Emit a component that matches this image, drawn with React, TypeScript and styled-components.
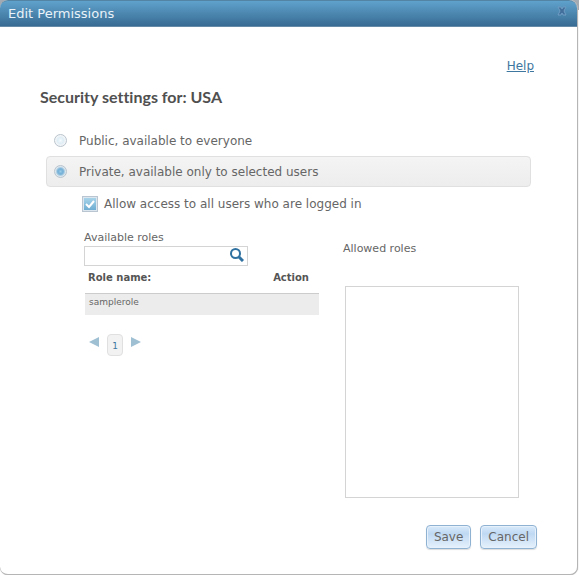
import React, { useState } from "react";
import styled, { createGlobalStyle, css } from "styled-components";

const GlobalStyle = createGlobalStyle`
  *, *::before, *::after { box-sizing: border-box; }
  body {
    margin: 0;
    background: #fff;
    color: #666;
    font-family: "DejaVu Sans", Verdana, sans-serif;
    font-size: 12px;
    line-height: 16px;
  }
  button, input { font: inherit; color: inherit; }
`;

const Backdrop = styled.div`
  padding-right: 1px;
  background: linear-gradient(#a3aab2 0, #a3aab2 10px, #fff 10px);
`;

const Dialog = styled.section`
  background: #fff;
  border: solid #b5b5b5;
  border-width: 0 1px 1px 0;
  border-radius: 8px;
  box-shadow: 0 0 1px #999;
`;

const TitleBar = styled.header`
  display: flex;
  align-items: flex-start;
  justify-content: space-between;
  height: 27px;
  padding: 5px 10px 0 8px;
  border-top: 1px solid #5484a3;
  border-bottom: 1px solid #668ba9;
  border-radius: 8px 8px 0 0;
  background: linear-gradient(#5fa2cc, #386b93);
`;

const Title = styled.h1`
  margin: 0;
  color: #e9f2f8;
  font-size: 13px;
  font-weight: 400;
  line-height: 16px;
`;

const CloseButton = styled.button`
  width: 10px;
  height: 10px;
  padding: 0;
  border: 0;
  background: none;
  cursor: pointer;
  svg { display: block; }
`;

const Content = styled.form`
  display: flex;
  flex-direction: column;
  padding: 31px 40px 25px;
`;

const HelpLink = styled.a`
  align-self: flex-end;
  margin-right: 3px;
  color: #3d77a0;
`;

const Heading = styled.h2`
  margin: 12px 0 17px;
  color: #505050;
  font: 700 16px/22px Lato, sans-serif;
  font-variant-ligatures: none;
`;

const Choice = styled.label<{ $selected: boolean }>`
  display: flex;
  align-items: center;
  gap: 12px;
  height: 31px;
  margin: 0 6px;
  padding: 0 7px;
  border: 1px solid transparent;
  border-radius: 4px;
  ${(p) =>
    p.$selected &&
    css`
      border-color: #e0e0e0;
      background: linear-gradient(#f4f4f4, #ededed);
    `}
`;

const Radio = styled.input.attrs({ type: "radio" })`
  appearance: none;
  width: 13px;
  height: 13px;
  margin: 0;
  border: 1px solid #b9c4cd;
  border-radius: 50%;
  background: radial-gradient(circle, #f4fafd 0, #dfedf5 3px, #f3f6f8 5px);
  &:checked {
    background: radial-gradient(circle, #9ccbe6 0, #78b3d9 2px, #7fb5d9 3px, #dde7ee 5px);
  }
`;

const CheckRow = styled.label`
  display: flex;
  align-items: center;
  align-self: flex-start;
  gap: 6px;
  height: 16px;
  margin: 9px 0 0 42px;
`;

const CheckHolder = styled.span`
  display: grid;
  > * { grid-area: 1 / 1; }
  svg { pointer-events: none; }
`;

const Checkbox = styled.input.attrs({ type: "checkbox" })`
  appearance: none;
  width: 16px;
  height: 16px;
  margin: 0;
  padding: 1px;
  border: 1px solid #b9c6d1;
  background: #fff;
  &:checked {
    background: linear-gradient(#a9d4ea, #6dadd2) content-box, #dbe6ee;
  }
`;

const Columns = styled.div`
  display: grid;
  grid-template-columns: 235px minmax(0, 1fr);
  column-gap: 26px;
  margin: 19px 18px 0 44px;
`;

const Column = styled.div<{ $top?: number }>`
  display: flex;
  flex-direction: column;
  padding-top: ${(p) => p.$top ?? 0}px;
`;

const FieldLabel = styled.label`
  font-size: 11px;
  line-height: 14px;
`;

const SearchBox = styled.div`
  display: flex;
  width: 164px;
  height: 20px;
  margin-top: 1px;
  border: 1px solid #d4d4d4;
  background: #fff;
`;

const SearchInput = styled.input`
  flex: 1;
  min-width: 0;
  padding: 0 4px;
  border: 0;
  outline: 0;
  background: none;
  font-size: 11px;
`;

const SearchButton = styled.button`
  align-self: flex-start;
  width: 17px;
  height: 15px;
  padding: 0;
  border: 0;
  background: none;
  cursor: pointer;
  svg { display: block; }
`;

const RolesTable = styled.table`
  width: 234px;
  margin: 1px 0 0 1px;
  border-collapse: collapse;
  text-align: left;
  th {
    height: 26px;
    padding: 4px 10px 8px 3px;
    border-bottom: 1px solid #ccc;
    color: #555;
    font-size: 10px;
    line-height: 14px;
  }
  th:last-child { text-align: right; }
  td {
    height: 21px;
    padding: 2px 4px 6px;
    background: #ececec;
    font-size: 9px;
    line-height: 12px;
  }
`;

const Pager = styled.nav`
  display: flex;
  align-items: flex-start;
  gap: 8px;
  margin: 19px 0 0 5px;
`;

const ArrowButton = styled.button`
  width: 10px;
  height: 15px;
  padding: 2px 0 0;
  border: 0;
  background: none;
  display: block;
  svg { display: block; }
`;

const PageButton = styled.button`
  width: 16px;
  height: 22px;
  padding: 2px 0 0;
  border: 1px solid #e0e0e0;
  border-radius: 4px;
  background: #f2f2f2;
  color: #3d77a0;
  font-size: 9px;
  line-height: 12px;
`;

const AllowedLabel = styled.h3`
  margin: 0 0 0 -2px;
  font-size: 11px;
  font-weight: 400;
  line-height: 14px;
`;

const AllowedList = styled.div`
  min-height: 212px;
  margin-top: 30px;
  border: 1px solid #d4d4d4;
`;

const Actions = styled.footer`
  display: flex;
  justify-content: flex-end;
  gap: 9px;
  margin-top: 27px;
`;

const ActionButton = styled.button`
  height: 24px;
  padding: 0 7px 1px;
  border: 1px solid #8fb2d3;
  border-radius: 4px;
  background: linear-gradient(#d9eafa 0, #bfd9f3 35%, #e6f1fc);
  box-shadow: inset 0 0 0 1px #e6f1fb, 0 1px 1px #ddd;
  cursor: pointer;
`;

export default function App() {
  const [access, setAccess] = useState("private");
  const [loggedIn, setLoggedIn] = useState(true);
  const [search, setSearch] = useState("");
  const roles = ["samplerole"].filter((role) => role.includes(search));

  return (
    <>
      <GlobalStyle />
      <Backdrop>
        <Dialog role="dialog" aria-labelledby="dialog-title">
          <TitleBar>
            <Title id="dialog-title">Edit Permissions</Title>
            <CloseButton type="button" aria-label="Close">
              <svg width="10" height="10" viewBox="0 0 10 10">
                <path d="M1 1h3l1 2 1-2h3L7 5l2 4H6L5 7 4 9H1l2-4z" fill="#426f9b" stroke="#6f9dc4" strokeWidth="1" />
              </svg>
            </CloseButton>
          </TitleBar>
          <Content onSubmit={(e) => e.preventDefault()}>
            <HelpLink href="#help">Help</HelpLink>
            <Heading>Security settings for: USA</Heading>
            <Choice $selected={access === "public"}>
              <Radio name="access" checked={access === "public"} onChange={() => setAccess("public")} />
              Public, available to everyone
            </Choice>
            <Choice $selected={access === "private"}>
              <Radio name="access" checked={access === "private"} onChange={() => setAccess("private")} />
              Private, available only to selected users
            </Choice>
            <CheckRow>
              <CheckHolder>
                <Checkbox checked={loggedIn} onChange={(e) => setLoggedIn(e.target.checked)} />
                {loggedIn && (
                  <svg width="16" height="16" viewBox="0 0 16 16" aria-hidden="true">
                    <path d="M4 8l3 3 5-6" fill="none" stroke="#fff" strokeWidth="2" />
                  </svg>
                )}
              </CheckHolder>
              Allow access to all users who are logged in
            </CheckRow>
            <Columns>
              <Column>
                <FieldLabel htmlFor="role-search">Available roles</FieldLabel>
                <SearchBox>
                  <SearchInput id="role-search" value={search} onChange={(e) => setSearch(e.target.value)} />
                  <SearchButton type="button" aria-label="Search roles">
                    <svg width="14" height="14" viewBox="0 0 14 14" fill="none" stroke="#2f71a0">
                      <circle cx="5.500" cy="5.500" r="4.500" strokeWidth="2" />
                      <path d="M9 9l4 4" strokeWidth="3" />
                    </svg>
                  </SearchButton>
                </SearchBox>
                <RolesTable>
                  <thead>
                    <tr>
                      <th scope="col">Role name:</th>
                      <th scope="col">Action</th>
                    </tr>
                  </thead>
                  <tbody>
                    {roles.map((role) => (
                      <tr key={role}>
                        <td>{role}</td>
                        <td />
                      </tr>
                    ))}
                  </tbody>
                </RolesTable>
                <Pager aria-label="Role pages">
                  <ArrowButton type="button" aria-label="Previous page">
                    <svg width="10" height="10"><path d="M10 0v10L0 5z" fill="#9fbfd3" /></svg>
                  </ArrowButton>
                  <PageButton type="button" aria-current="page">1</PageButton>
                  <ArrowButton type="button" aria-label="Next page">
                    <svg width="10" height="10"><path d="M0 0v10l10-5z" fill="#9fbfd3" /></svg>
                  </ArrowButton>
                </Pager>
              </Column>
              <Column $top={11}>
                <AllowedLabel id="allowed-label">Allowed roles</AllowedLabel>
                <AllowedList role="list" aria-labelledby="allowed-label" />
              </Column>
            </Columns>
            <Actions>
              <ActionButton type="submit">Save</ActionButton>
              <ActionButton type="button">Cancel</ActionButton>
            </Actions>
          </Content>
        </Dialog>
      </Backdrop>
    </>
  );
}
